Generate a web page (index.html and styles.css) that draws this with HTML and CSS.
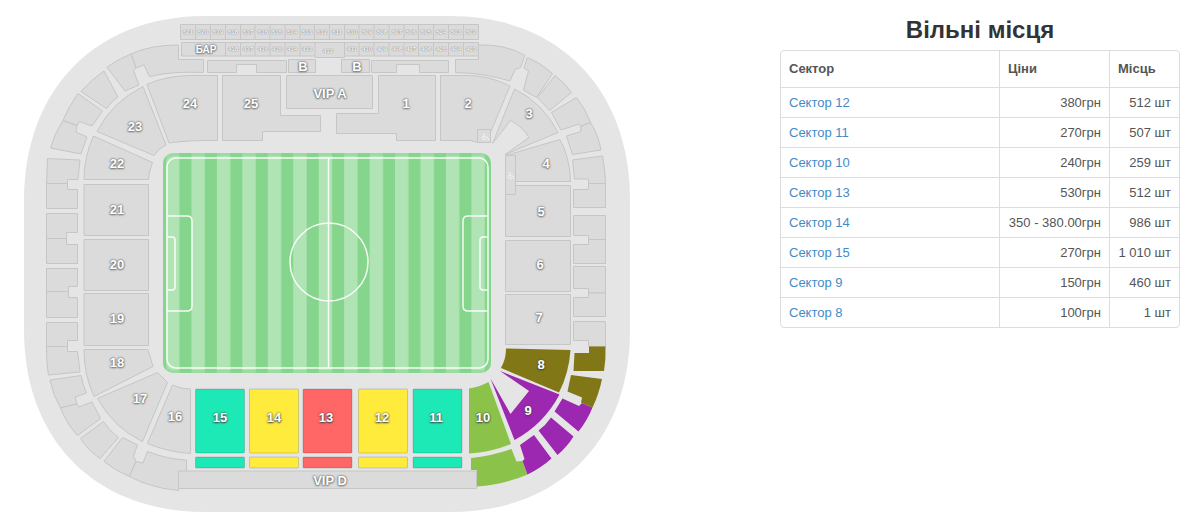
FILE: index.html
```html
<!DOCTYPE html>
<html lang="uk">
<head>
    <meta charset="UTF-8">
    <meta name="viewport" content="width=device-width, initial-scale=1.0">
    <title>Вільні місця</title>
    <link rel="stylesheet" href="styles.css">
</head>
<body>
<div class="page">
    <div class="map-col">
        <svg class="stadium" viewBox="0 0 640 520" role="img" aria-label="Схема стадіону">
            <defs>
                <pattern id="grass" x="166" y="0" width="25.45" height="20" patternUnits="userSpaceOnUse">
                    <rect class="grass-light" width="25.45" height="20"/>
                    <rect class="grass-dark" x="13.4" width="12.6" height="20"/>
                </pattern>
            </defs>

            <path class="base" d="M205 16H450C560 16 630 90 630 200V330C630 440 560 512 450 512H205C95 512 24 440 24 330V200C24 90 95 16 205 16Z"/>

            <!-- поле -->
            <rect x="163" y="153" width="328" height="220" rx="10" fill="url(#grass)"/>
            <rect class="rim" x="164.5" y="154.5" width="325" height="217" rx="9"/>
            <g class="lines">
                <rect x="167" y="158" width="321" height="210" rx="9"/>
                <path d="M328.500 158V368"/>
                <circle cx="329" cy="262" r="39"/>
                <path d="M167 216H187Q192 216 192 221V306Q192 311 187 311H167M167 237H172Q175 237 175 240V287Q175 290 172 290H167"/>
                <path d="M488 216H468Q463 216 463 221V306Q463 311 468 311H488M488 237H483Q480 237 480 240V287Q480 290 483 290H488"/>
            </g>

            <!-- верхні ложі -->
            <g class="seat">
                <rect x="180.5" y="24.5" width="298" height="15"/>
                <path d="M195.500 24.500v15M210.500 24.500v15M225.500 24.500v15M240.500 24.500v15M255 24.500v15M270 24.500v15M285 24.500v15M300 24.500v15M314.500 24.500v15M329.500 24.500v15M344.500 24.500v15M359 24.500v15M374 24.500v15M389 24.500v15M404 24.500v15M418.500 24.500v15M433.500 24.500v15M448.500 24.500v15M463.500 24.500v15"/>
                <path d="M181.500 42.500H478.500V56H344.500V57.500H315V56H181.500Z"/>
                <path d="M225.500 42.500v13.500M240.500 42.500v13.500M255 42.500v13.500M270 42.500v13.500M285 42.500v13.500M300 42.500v13.500M315 42.500v13.500M344.500 42.500v13.500M359 42.500v13.500M374 42.500v13.500M389 42.500v13.500M404 42.500v13.500M418.500 42.500v13.500M433.500 42.500v13.500M448.500 42.500v13.500M463.500 42.500v13.500"/>
                <path d="M207.500 60.500H286.500V72.500H256.500V64.500H236.500V72.500H207.500Z"/>
                <path d="M288.500 59.500H315.500V72.500H288.500ZM341.500 59.500H369.500V72.500H341.500Z"/>
                <path d="M371.500 60.500H448.500V72.500H419.500V64.500H396.500V72.500H371.500Z"/>
            </g>

            <!-- зовнішнє кільце, лівий бік -->
            <g class="seat">
                <path d="M131 54Q150 45 178.500 45V59.500H203.500V72.500Q172 71 149.500 76.500L144 65L136 68Z"/>
                <path d="M131 54Q118 59 107 67L125 91L139 85L133.500 70.500L136 68Z"/>
                <path d="M104 71Q92 79 81 91.500L106.500 108.500Q111 102 118 97Z"/>
                <path d="M78 93.500Q69 106 63 120.500L77 125.500L79.500 121.500L92 126L102.500 111Z"/>
                <path d="M63 120.500Q54 134 50.500 148L81 154L87 137L76 132L77 125.500Z"/>
                <path d="M47.500 158.500L80 160L78 179.500H67.500V183.500H46.500Z"/>
                <path d="M46.500 183.500H67.500V189.500H77.500V208.500H46.500Z"/>
                <path d="M46.500 213.500H77.500V232.500H66.500V238.500H46.500Z"/>
                <path d="M46.500 238.500H66.500V244.500H77.500V263.500H46.500Z"/>
                <path d="M46.500 268.500H77.500V286.500H68.500V291.500H46.500Z"/>
                <path d="M46.500 291.500H68.500V297.500H77.500V317.500H46.500Z"/>
                <path d="M46.500 322.500H77.500V340.500H67.500V346.500H46.500Z"/>
                <path d="M46.500 346.500H67.500V351.500H77.500L80 372L48.500 375Q46.500 364 46.500 346.500Z"/>
                <path d="M50 380L81 375.500Q83 385 86.500 393L75 397L77 404L60.500 408Q53 395 50 380Z"/>
                <path d="M60.500 408L77 404L79 407L92 402L100.500 418.500L77.500 435.500Q67 424 60.500 408Z"/>
                <path d="M80.500 438.500L103.500 421.500Q109 431 118.500 437.500L100 458.500Q88 450 80.500 438.500Z"/>
                <path d="M104 461.500L122.500 437.500L137.500 445L133.500 456L136 461.500L129.500 476.500Q116 471 104 461.500Z"/>
                <path d="M129.500 476.500L136 461.500L143 463L147.500 451.500Q166 459 186.500 460V471.500H178.500V490.500Q151 488 129.500 476.500Z"/>
            </g>

            <!-- зовнішнє кільце, правий бік -->
            <g class="seat">
                <path d="M478.500 45Q506 44 525 55.500L520.500 67.500L515 69.500L510 81Q484 73 455.500 72.500V59.500H478.500Z"/>
                <path d="M527.500 57.500Q541 63 552.500 73.500L536.500 97.500L523.500 90L528.500 71L524 68Z"/>
                <path d="M555 75.500Q564 82 571.500 92.500L549.500 110.500L537.500 97.500Z"/>
                <path d="M576.500 97.500Q585 108 590.500 122.500L580.500 126.500L579 124L561 130L551.500 112.500Z"/>
                <path d="M590.500 122.500Q598 134 601 150L572.500 154.500L566.500 136L581 131.500L580.500 126.500Z"/>
                <path d="M572.500 160L602.500 156Q605 168 605.500 183.500H588.500V179H574.500Z"/>
                <path d="M588.500 183.500H605.500V207.500H573.500V189.500H588.500Z"/>
                <path d="M573.500 215.500H605.500V239.500H588.500V235.500H573.500Z"/>
                <path d="M588.500 239.500H605.500V263.500H573.500V244.500H588.500Z"/>
                <path d="M573.500 266.500H605.500V293H588.500V288.500H573.500Z"/>
                <path d="M588.500 293H605.500V316.500H573.500V297.500H588.500Z"/>
                <path d="M573.500 321.500H605.500V346.500H588.500V340.500H573.500Z"/>
            </g>

            <!-- сектори без місць -->
            <g class="seat">
                <path d="M147 84.500Q165 76 190 75.500H217.500V140.500Q190 140 169 143Z"/>
                <path d="M143 86.500Q112 102 97 131.500L154 155.500Q158 149 166 145Z"/>
                <path d="M93.500 136Q84 157 84 179.500H148.500Q149 171 152.500 162.500Z"/>
                <path d="M84 184.500H148.500V235.500H84Z"/>
                <path d="M84 239.500H148.500V290.500H84Z"/>
                <path d="M84 293.500H148.500V345.500H84Z"/>
                <path d="M84 349.500H148L153 366.500L94 396.500Q84 375 84 349.500Z"/>
                <path d="M157.500 372.500L167.500 382.500L142.500 441.500Q114 428 97.500 398.500Z"/>
                <path d="M172.500 385Q181 389 190.500 389V453.500Q168 452 147.500 443.500Z"/>
                <path d="M222.500 75.500H280.500V115.500H320.500V131.500H262.500V140.500H222.500Z"/>
                <path d="M286.500 75.500H372.500V108.500H286.500Z"/>
                <path d="M378.500 75.500H435.500V140.500H396.500V133.500H336.500V113.500H378.500Z"/>
                <path d="M440.500 75.500H468Q491 76 510 86L489 136L476.500 142L470 140.500H440.500Z"/>
                <path d="M514.500 89Q543 103 558 132.500L505 154.500L529 137.500Q522 126 510.500 120.500L492.500 143.500Z"/>
                <path d="M505.500 155.500L560 139.500Q570 158 570.500 181.500H515.500Z"/>
                <path d="M505.500 185.500H570.500V236.500H505.500Z"/>
                <path d="M505.500 155.500H515.500V194.500H505.500ZM477.500 129.500H490.500V142.500H477.500Z"/>
                <path d="M505.500 240.500H570.500V291.500H505.500Z"/>
                <path d="M505.500 294.500H570.500V344.500H505.500Z"/>
            </g>

            <!-- місця для візків -->
            <g class="wheel">
                <path d="M484 133v4h3l2 3M483 136a2 2 0 1 0 3 3"/>
                <path d="M510 172v4h3l1 3M509 175a2 2 0 1 0 3 3"/>
            </g>

            <!-- сектори з вільними місцями -->
            <g class="free s15">
                <rect x="195.500" y="389" width="49" height="64" rx="1"/>
                <rect x="195.500" y="457" width="49" height="11" rx="1"/>
            </g>
            <g class="free s14">
                <rect x="249.500" y="389" width="49" height="64" rx="1"/>
                <rect x="249.500" y="457" width="49" height="11" rx="1"/>
            </g>
            <g class="free s13">
                <rect x="303" y="389" width="49" height="64" rx="1"/>
                <rect x="303" y="457" width="49" height="11" rx="1"/>
            </g>
            <g class="free s12">
                <rect x="358.500" y="389" width="49" height="64" rx="1"/>
                <rect x="358.500" y="457" width="49" height="11" rx="1"/>
            </g>
            <g class="free s11">
                <rect x="413" y="389" width="49" height="64" rx="1"/>
                <rect x="413" y="457" width="49" height="11" rx="1"/>
            </g>
            <g class="free s10">
                <path d="M469 388.500Q479 387 488.500 382L511 444Q491 452 469 453.500Z"/>
                <path d="M471 458Q492 456 511.500 449L516.500 461.500L522.500 461L527.500 474.500Q503 485 477 486.500V470H471Z"/>
            </g>
            <g class="free s9">
                <path d="M500 371L559.500 394.500Q544 424 514.500 440L490.500 378.500L510.500 414L529 391Z"/>
                <path d="M520 445L534 435L551.500 458.500Q541 468 527.500 474.500L522.500 461L524.500 459Z"/>
                <path d="M538.500 430.500Q546 425 551 417.500L573.500 436.500Q567 447 557.500 455Z"/>
                <path d="M554.500 411.500L562.500 398.500L579 406L582 403L592.500 407.500Q587 421 578.500 431.500Z"/>
            </g>
            <g class="free s8">
                <path d="M506 348.500L570.500 350Q569 373 559 392.500L501 368Q506 359 506 348.500Z"/>
                <path d="M574.500 353H589V346.500H605.500Q606 359 604 371H573.500Z"/>
                <path d="M571 375L602 379Q599 394 592.500 407.500L581 402.500L582 397.500L567.500 391.500Z"/>
            </g>
            <path class="seat" d="M178.500 471H476.500V488.500H178.500Z"/>

            <g class="label tiny">
                <text x="188" y="34">521</text>
                <text x="203" y="34">520</text>
                <text x="218" y="34">519</text>
                <text x="233" y="34">518</text>
                <text x="248" y="34">517</text>
                <text x="263" y="34">516</text>
                <text x="277" y="34">515</text>
                <text x="292" y="34">514</text>
                <text x="307" y="34">513</text>
                <text x="322" y="34">512</text>
                <text x="337" y="34">511</text>
                <text x="352" y="34">510</text>
                <text x="367" y="34">509</text>
                <text x="382" y="34">508</text>
                <text x="397" y="34">507</text>
                <text x="411" y="34">506</text>
                <text x="426" y="34">505</text>
                <text x="441" y="34">504</text>
                <text x="456" y="34">503</text>
                <text x="471" y="34">502</text>
                <text x="233" y="51">418</text>
                <text x="248" y="51">417</text>
                <text x="263" y="51">416</text>
                <text x="277" y="51">415</text>
                <text x="292" y="51">414</text>
                <text x="307" y="51">413</text>
                <text x="328" y="53">412</text>
                <text x="352" y="51">411</text>
                <text x="367" y="51">410</text>
                <text x="382" y="51">409</text>
                <text x="397" y="51">408</text>
                <text x="411" y="51">407</text>
                <text x="426" y="51">406</text>
                <text x="441" y="51">405</text>
                <text x="456" y="51">404</text>
                <text x="471" y="51">403</text>
            </g>
            <text class="label bar" x="206" y="53">БАР</text>
            <g class="label">
                <text x="303" y="71">B</text>
                <text x="357" y="71">B</text>
                <text x="330" y="98">VIP A</text>
                <text x="330" y="485">VIP D</text>
                <text x="406" y="108">1</text>
                <text x="468" y="108">2</text>
                <text x="529" y="118">3</text>
                <text x="546" y="168">4</text>
                <text x="541" y="216">5</text>
                <text x="540" y="269">6</text>
                <text x="539" y="322">7</text>
                <text x="175" y="421">16</text>
                <text x="140" y="403">17</text>
                <text x="117" y="367">18</text>
                <text x="117" y="323">19</text>
                <text x="117" y="269">20</text>
                <text x="117" y="214">21</text>
                <text x="117" y="168">22</text>
                <text x="135" y="131">23</text>
                <text x="190" y="108">24</text>
                <text x="251" y="108">25</text>
            </g>
            <g class="label active">
                <text x="541" y="369">8</text>
                <text x="528" y="415">9</text>
                <text x="483" y="422">10</text>
                <text x="436" y="422">11</text>
                <text x="382" y="422">12</text>
                <text x="326" y="422">13</text>
                <text x="274" y="422">14</text>
                <text x="220" y="422">15</text>
            </g>
        </svg>
    </div>

    <div class="info-col">
        <h3 class="title">Вільні місця</h3>
        <table class="prices">
            <thead>
                <tr><th>Сектор</th><th class="col-price">Ціни</th><th class="col-count">Місць</th></tr>
            </thead>
            <tbody>
                <tr><td><a href="#s12">Сектор 12</a></td><td class="num">380грн</td><td class="num">512 шт</td></tr>
                <tr><td><a href="#s11">Сектор 11</a></td><td class="num">270грн</td><td class="num">507 шт</td></tr>
                <tr><td><a href="#s10">Сектор 10</a></td><td class="num">240грн</td><td class="num">259 шт</td></tr>
                <tr><td><a href="#s13">Сектор 13</a></td><td class="num">530грн</td><td class="num">512 шт</td></tr>
                <tr><td><a href="#s14">Сектор 14</a></td><td class="num">350 - 380.00грн</td><td class="num">986 шт</td></tr>
                <tr><td><a href="#s15">Сектор 15</a></td><td class="num">270грн</td><td class="num">1 010 шт</td></tr>
                <tr><td><a href="#s9">Сектор 9</a></td><td class="num">150грн</td><td class="num">460 шт</td></tr>
                <tr><td><a href="#s8">Сектор 8</a></td><td class="num">100грн</td><td class="num">1 шт</td></tr>
            </tbody>
        </table>
    </div>
</div>
</body>
</html>
```
FILE: styles.css
```css
* { box-sizing: border-box; }
body {
    margin: 0;
    background: #fff;
    color: #555;
    font-family: "Liberation Sans", Arial, sans-serif;
    font-size: 13px;
    line-height: 20px;
}
.page {
    display: flex;
    justify-content: space-between;
    align-items: flex-start;
    padding-right: 5px;
}
.map-col { flex: 0 1 640px; min-width: 0; }
.info-col { flex: 0 0 400px; padding-top: 10px; }

/* схема */
.stadium { display: block; width: 100%; }
.base { fill: #e5e5e5; }
.grass-light { fill: #b0e4b4; }
.grass-dark { fill: #86d58c; }
.rim { fill: none; stroke: #86d58c; stroke-width: 3; opacity: 0.5; }
.lines { fill: none; stroke: #fff; stroke-width: 1.5; opacity: 0.9; }
.seat { fill: #dbdbdb; stroke: #c6c6c6; stroke-width: 1; stroke-linejoin: round; }
.wheel { fill: none; stroke: #f4f4f4; stroke-width: 1; }
.free { stroke: rgba(0, 0, 0, 0.15); stroke-width: 1; stroke-linejoin: round; }
.s8 { fill: #827717; }
.s9 { fill: #9c27b0; }
.s10 { fill: #8bc34a; }
.s11, .s15 { fill: #1de9b6; }
.s12, .s14 { fill: #ffeb3b; }
.s13 { fill: #ff6666; }
.s8, .s9, .s10 { stroke: none; }
.label {
    fill: #fff;
    font-size: 13px;
    font-weight: bold;
    text-anchor: middle;
    text-shadow: 0 0 2px #666, 0 0 2px #777, 0 1px 2px #888;
}
.active { text-shadow: 0 0 2px #444, 0 1px 2px #444; }
.bar { font-size: 10px; }
.tiny { font-size: 6px; text-shadow: 0 0 1px #777, 0 0 1px #777; }

/* таблиця */
.title {
    margin: 0;
    color: #333;
    font-size: 24px;
    line-height: 40px;
    text-align: center;
}
.prices {
    width: 100%;
    border: 1px solid #ddd;
    border-radius: 4px;
    border-collapse: separate;
    border-spacing: 0;
}
.prices th { padding: 8px; text-align: left; }
.prices td { padding: 5px 8px 4px; border-top: 1px solid #ddd; }
.prices th + th, .prices td + td { border-left: 1px solid #ddd; }
.prices .num { text-align: right; white-space: nowrap; }
.col-price { width: 110px; }
.col-count { width: 70px; }
.prices a { color: #428bca; text-decoration: none; }
```
